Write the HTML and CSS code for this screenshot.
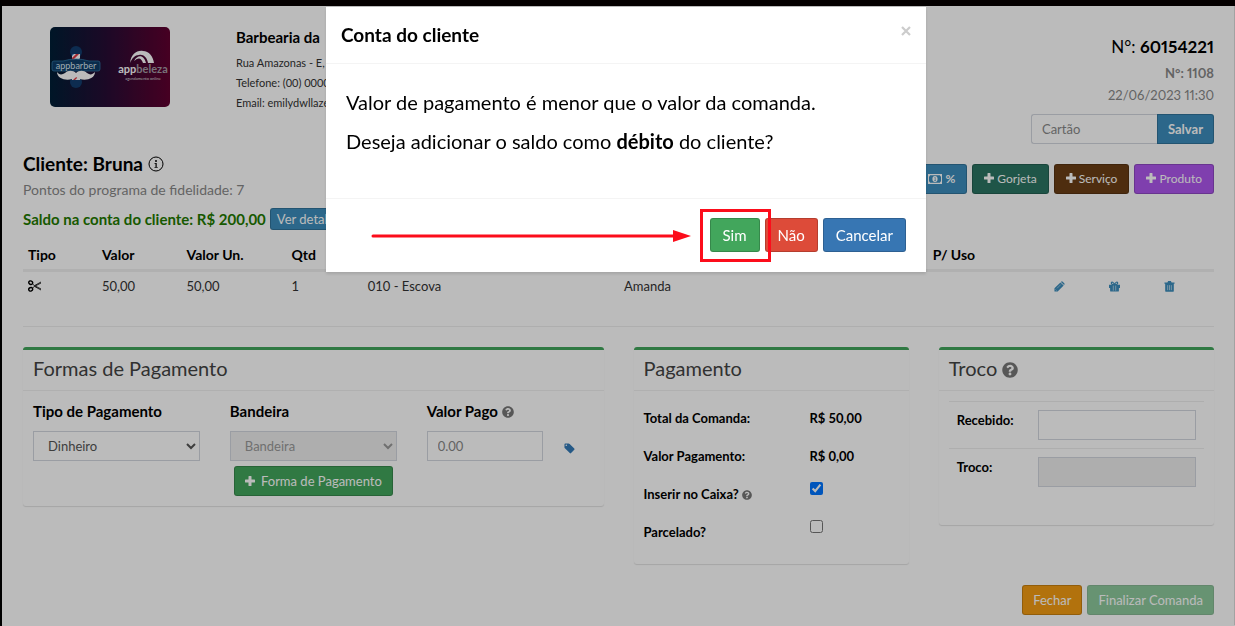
FILE: index.html
```html
<!DOCTYPE html>
<html lang="pt-BR">
<head>
<meta charset="utf-8">
<title>Comanda 60154221</title>
<meta name="viewport" content="width=device-width, initial-scale=1">
<link rel="stylesheet" href="styles.css">
</head>
<body>
<svg class="defs" aria-hidden="true">
  <symbol id="help" viewBox="0 0 512 512"><path d="M504 256c0 136.997-111.043 248-248 248S8 392.997 8 256C8 119.083 119.043 8 256 8s248 111.083 248 248zM262.655 90c-54.497 0-89.255 22.957-116.549 63.758-3.536 5.286-2.353 12.415 2.715 16.258l34.699 26.31c5.205 3.947 12.621 3.008 16.665-2.122 17.864-22.658 30.113-35.797 57.303-35.797 20.429 0 45.698 13.148 45.698 32.958 0 14.976-12.363 22.667-32.534 33.976C247.128 238.528 216 254.941 216 296v4c0 6.627 5.373 12 12 12h56c6.627 0 12-5.373 12-12v-1.333c0-28.462 83.186-29.647 83.186-106.667 0-58.002-60.165-102-116.531-102zM256 338c-25.365 0-46 20.635-46 46 0 25.364 20.635 46 46 46s46-20.636 46-46c0-25.365-20.635-46-46-46z"/></symbol>
  <symbol id="plus" viewBox="0 0 10 10"><path d="M4 0h2a.5.5 0 0 1 .5.5v3H9.500a.5.5 0 0 1 .5.5v2a.5.5 0 0 1-.5.5H6.500v3a.5.5 0 0 1-.5.5H4a.5.5 0 0 1-.5-.5v-3H.5A.5.5 0 0 1 0 6V4a.5.5 0 0 1 .5-.5h3v-3A.5.5 0 0 1 4 0z"/></symbol>
</svg>

<main class="page">
  <header class="top">
    <svg class="logo" viewBox="0 0 120 80" role="img" aria-label="appbarber e appbeleza">
      <defs><linearGradient id="logo-bg"><stop offset="0" stop-color="#001e36"/><stop offset=".45" stop-color="#250d35"/><stop offset="1" stop-color="#60002f"/></linearGradient></defs>
      <rect width="120" height="80" rx="5" fill="url(#logo-bg)"/>
      <circle cx="26" cy="25" r="6" fill="#123d6d"/><circle cx="26" cy="55" r="6" fill="#123d6d"/>
      <path d="M22 27h8v7h-8zM22 48h8v5h-8z" fill="#fff"/>
      <path d="M22 31l4-4h3l-7 7zM23 53l5-5h2l-5 5z" fill="#e23a46"/><path d="M27 34l3-3v3zM22 27h2l-2 2z" fill="#2d70b9"/>
      <path d="M4 34h9q13-4 26 0h9q2 0 2 2v6q0 2-2 2H4q-2 0-2-2v-6q0-2 2-2z" fill="#0e3c68" stroke="#3580ae" stroke-width=".7"/>
      <path d="M26 46c-3-3-8-3-11 0-3 2-6 2-8-1 0 8 13 10 19 5 6 5 19 3 19-5-3 3-5 3-8 1-3-3-8-3-11 0z" fill="#fff"/>
      <text x="26" y="42" class="logo-barber">appbarber</text>
      <path d="M80 36c1-9 7-13 13-12 6 0 10 5 11 12h-6c-1-6-5-9-9-8-4 0-7 3-9 8z" fill="#fff"/><path d="M84 34c4-7 10-6 12 2h-3c-2-5-4-6-9-2z" fill="#fff"/>
      <text x="93" y="46" class="logo-beleza">app<tspan fill="#a39aa4">beleza</tspan></text>
      <text x="93" y="53" class="logo-tag">agendamento online</text>
    </svg>
    <address class="shop">
      <strong>Barbearia da</strong>
      <span>Rua Amazonas - E,</span>
      <span>Telefone: (00) 0000</span>
      <span>Email: emilydwllaze</span>
    </address>
    <div class="order">
      <p class="order-number">N°: <b>60154221</b></p>
      <p class="order-sub"><b>N°: 1108</b></p>
      <p class="order-sub">22/06/2023 11:30</p>
      <form class="card-form">
        <input class="field" type="text" placeholder="Cartão" aria-label="Cartão">
        <button class="btn blue" type="button"><b>Salvar</b></button>
      </form>
    </div>
  </header>

  <section class="client">
    <div>
      <h1>Cliente: Bruna
        <svg class="info" viewBox="0 0 16 16"><circle cx="8" cy="8" r="7" fill="none" stroke="#000"/><circle cx="8" cy="5" r="1"/><path d="M6.500 7h2.200v4h1v.8H6.500V11h1V7.800h-1z"/></svg>
      </h1>
      <p class="points">Pontos do programa de fidelidade: 7</p>
      <p class="balance"><b>Saldo na conta do cliente: R$ 200,00</b> <button class="btn blue small" type="button">Ver detalhes</button></p>
    </div>
    <div class="actions tools">
      <button class="btn blue" type="button"><svg class="money" viewBox="0 0 14 10"><path fill-rule="evenodd" d="M0 0h14v10H0zM2 1.300Q2 2.500 1 2.500v5q1 0 1 1.200h10q0-1.200 1-1.200v-5q-1 0-1-1.200zM7 2a2.600 3 0 0 1 0 6 2.600 3 0 0 1 0-6zM6.500 3.300v.8h.3v2h-.5v.7h1.600v-.7h-.4V3.300z"/></svg> <b>%</b></button>
      <button class="btn teal" type="button"><svg class="plus"><use href="#plus"/></svg> Gorjeta</button>
      <button class="btn brown" type="button"><svg class="plus"><use href="#plus"/></svg> Serviço</button>
      <button class="btn purple" type="button"><svg class="plus"><use href="#plus"/></svg> Produto</button>
    </div>
  </section>

  <table class="items">
    <colgroup><col class="c-type"><col class="c-value"><col class="c-unit"><col class="c-qty"><col class="c-desc"><col class="c-staff"><col class="c-use"><col class="c-act"><col class="c-act"><col class="c-act"></colgroup>
    <thead><tr><th>Tipo</th><th>Valor</th><th>Valor Un.</th><th>Qtd</th><th></th><th></th><th>P/ Uso</th><th></th><th></th><th></th></tr></thead>
    <tbody><tr>
      <td><svg class="scissors" viewBox="0 0 14 12"><g fill="none" stroke="#000"><ellipse cx="2.700" cy="2.700" rx="2" ry="1.700" stroke-width="1.400" transform="rotate(25 2.700 2.700)"/><ellipse cx="2.700" cy="9.300" rx="2" ry="1.700" stroke-width="1.400" transform="rotate(-25 2.700 9.300)"/><path d="M4.500 4l2 1.600L13 2M4.500 8l2-1.600L13 10M6.500 5.600L13 9M6.500 6.400L13 3" stroke-width=".8"/></g></svg></td>
      <td>50,00</td><td>50,00</td><td>1</td><td>010 - Escova</td><td>Amanda</td><td></td>
      <td><button class="icon" type="button" aria-label="Editar"><svg viewBox="0 0 12 12"><path d="M.5 8L7 1.500l3.500 3.500L4 11.500H.5zM7.800.8q.9-.8 1.700 0l1.700 1.700q.8.800 0 1.700L11 4.400 7.600 1z"/><path d="M1.500 9.200l1.300 1.300M3.300 8L7.500 3.800" stroke="#fff" stroke-width=".5"/></svg></button></td>
      <td><button class="icon" type="button" aria-label="Presente"><svg viewBox="0 0 12 12"><path d="M0 4h12v3.500H0zM1.200 7h9.600v3.500q0 1-1 1H2.200q-1 0-1-1z"/><path d="M6 4.200C5 .8 2.500.5 2.500 2.300S5 4.200 6 4.200s3.500 0 3.500-1.900S7 .8 6 4.200z" fill="none" stroke="#3c8dbc" stroke-width="1.200"/><path d="M4.700 5v5.500M7.300 5v5.500" stroke="#fff" stroke-width=".6"/></svg></button></td>
      <td><button class="icon" type="button" aria-label="Excluir"><svg viewBox="0 0 12 12"><path d="M.5 1.500h3.200L4.500 0h3l.8 1.500h3.200v1.600H.5zM1.300 3.100h9.400v7.400q0 1.300-1.200 1.300h-7q-1.200 0-1.200-1.300z"/><path d="M4 4.500v5.500M6 4.500v5.500M8 4.500v5.500" stroke="#fff" stroke-width=".6"/></svg></button></td>
    </tr></tbody>
  </table>

  <div class="panels">
    <section class="panel wide">
      <h2>Formas de Pagamento</h2>
      <div class="panel-body methods">
        <div>
          <label for="tipo">Tipo de Pagamento</label>
          <select class="field" id="tipo"><option>Dinheiro</option></select>
        </div>
        <div>
          <label for="bandeira">Bandeira</label>
          <select class="field" id="bandeira" disabled><option>Bandeira</option></select>
          <button class="btn green add" type="button"><svg class="plus"><use href="#plus"/></svg> Forma de Pagamento</button>
        </div>
        <div>
          <label for="pago">Valor Pago <svg class="help"><use href="#help"/></svg></label>
          <div class="paid">
            <input class="field" id="pago" type="text" placeholder="0.00">
            <button class="icon" type="button" aria-label="Desconto"><svg viewBox="0 0 12 12"><path fill="#337ab7" fill-rule="evenodd" d="M.5 1.500q0-1 1-1H5q.7 0 1.200.5l5 5q.7.700 0 1.400L7.700 11q-.7.700-1.400 0L1 5.800Q.5 5.300.5 4.500zM2.500 1.600a.9.900 0 1 0 0 1.800.9.900 0 0 0 0-1.800z"/></svg></button>
          </div>
        </div>
      </div>
    </section>

    <section class="panel">
      <h2>Pagamento</h2>
      <div class="panel-body summary">
        <b>Total da Comanda:</b><b>R$ 50,00</b>
        <b>Valor Pagamento:</b><b>R$ 0,00</b>
        <label for="caixa">Inserir no Caixa? <svg class="help tiny"><use href="#help"/></svg></label><input type="checkbox" id="caixa" checked>
        <label for="parcelado">Parcelado?</label><input type="checkbox" id="parcelado">
      </div>
    </section>

    <section class="panel">
      <h2>Troco <svg class="help big"><use href="#help"/></svg></h2>
      <div class="panel-body change">
        <div class="change-row"><label for="recebido">Recebido:</label><input class="field" id="recebido" type="text"></div>
        <div class="change-row"><label for="troco">Troco:</label><input class="field" id="troco" type="text" disabled></div>
      </div>
    </section>
  </div>

  <footer class="actions bottom">
    <button class="btn orange" type="button">Fechar</button>
    <button class="btn green" type="button" disabled>Finalizar Comanda</button>
  </footer>
</main>

<div class="backdrop">
  <div class="modal" role="dialog" aria-labelledby="modal-title">
    <header class="modal-header">
      <h2 id="modal-title">Conta do cliente</h2>
      <button class="close" type="button" aria-label="Fechar"><svg viewBox="0 0 10 10"><path d="M1 1l8 8M9 1L1 9" stroke="#ccc" stroke-width="2.200"/></svg></button>
    </header>
    <div class="modal-body">
      <p>Valor de pagamento é menor que o valor da comanda.</p>
      <p>Deseja adicionar o saldo como <b>débito</b> do cliente?</p>
    </div>
    <footer class="modal-footer">
      <svg class="arrow" viewBox="0 0 320 14"><path d="M2 7h306" stroke="#fc0d1b" stroke-width="3" stroke-linecap="round"/><path d="M302 1l18 6-18 6z" fill="#fc0d1b"/></svg>
      <span class="marked"><button class="btn large success" type="button">Sim</button></span>
      <button class="btn large danger" type="button">Não</button>
      <button class="btn large primary" type="button">Cancelar</button>
    </footer>
  </div>
</div>
</body>
</html>
```

FILE: styles.css
```css
* { box-sizing: border-box; }

body {
  margin: 0;
  min-height: 100vh;
  background: #fff;
  border-top: 6px solid #060000;
  border-left: 2px solid #000;
  color: #000;
  font: 13px/20px Lato, "Open Sans", sans-serif;
}

h1, h2, p { margin: 0; font-weight: 400; }
b, strong, th { font-weight: 700; }
button, input, select { font-family: inherit; }
svg { fill: currentColor; }
.defs { display: none; }

.page { padding: 0 20px 10px 21px; border-right: 1px solid #ddd; }

/* Header */
.top { display: flex; align-items: flex-start; padding-top: 21px; }
.logo { width: 120px; height: 80px; margin: 0 66px 0 27px; }
.logo text { font-family: Lato, sans-serif; text-anchor: middle; }
.logo-barber { font-size: 9px; fill: #d8e4ee; }
.logo-beleza { font-size: 11px; font-weight: 700; fill: #fff; }
.logo-tag { font-size: 4px; fill: #ddd; }
.shop { display: flex; flex-direction: column; font-style: normal; font-size: 11px; color: #333; white-space: nowrap; }
.shop strong { font-size: 15px; line-height: 20px; margin-bottom: 6px; color: #000; }
.order { margin-left: auto; padding-top: 5px; text-align: right; font-variant-numeric: proportional-nums; }
.order-number { font-size: 17px; line-height: 30px; }
.order-sub { font-size: 13px; line-height: 22px; color: #888; }
.card-form { display: flex; justify-content: flex-end; margin-top: 8px; }
.card-form .field { width: 126px; border-right: 0; border-radius: 3px 0 0 3px; }
.card-form .btn { border-radius: 0 3px 3px 0; }

/* Controls */
.btn {
  height: 30px;
  padding: 0 10px;
  border: 1px solid rgba(0, 0, 0, .18);
  border-radius: 3px;
  color: #fff;
  font-size: 13px;
  line-height: 18px;
  white-space: nowrap;
}
.btn:disabled { opacity: .6; }
.small { height: 22px; padding: 0 6px; }
.blue { background: #3c8dbc; }
.teal { background: #2b7563; }
.brown { background: #6b3e15; }
.purple { background: #ae57ee; }
.green, .success { background: #42a65c; }
.orange { background: #f39c12; }
.danger { background: #dd4b39; }
.primary { background: #3776b3; }
.large { height: 34px; padding: 0 12px; font-size: 15px; }
.plus { width: 10px; height: 10px; }
.money { width: 14px; height: 10px; vertical-align: -1px; }

.field {
  display: block;
  width: 100%;
  height: 30px;
  padding: 0 10px;
  border: 1px solid #d2d6de;
  border-radius: 0;
  background: #fff;
  color: #555;
  font-size: 13px;
}
.field::placeholder { color: #888; opacity: 1; }
.field:disabled { background: #eee; color: #999; opacity: 1; }
.icon { width: 11px; height: 20px; padding: 0; border: 0; background: none; color: #3c8dbc; }
.icon svg { display: block; width: 11px; height: 11px; }
.help { width: 12px; height: 12px; vertical-align: -1px; color: #777; }
.tiny { width: 10px; height: 10px; }
.big { width: 16px; height: 16px; vertical-align: -2px; }

/* Client */
.client { display: flex; justify-content: space-between; align-items: flex-start; margin-top: 8px; padding-top: 12px; }
.client h1 { font-size: 19px; line-height: 24px; font-weight: 700; margin-top: -12px; }
.info { width: 16px; height: 16px; vertical-align: -1px; }
.points { padding: 4px 0; font-size: 14px; line-height: 20px; color: #888; }
.balance { display: flex; align-items: center; gap: 4px; height: 30px; font-size: 15px; color: #1f7a00; }
.actions { display: flex; justify-content: flex-end; gap: 5px; }
.tools .btn { padding: 0 11px; font-size: 12px; }

/* Items */
.items { width: 100%; table-layout: fixed; border-collapse: collapse; border-bottom: 1px solid #eee; }
.items th, .items td { padding: 0 5px; text-align: left; font-size: 13px; }
.items th { height: 36px; padding-top: 7px; border-bottom: 3px solid #f0f0f0; font-size: 14px; }
.items td { height: 56px; padding-top: 4px; vertical-align: top; color: #333; }
.items .icon svg { margin-top: 1px; }
.scissors { display: block; width: 14px; height: 12px; margin-top: 4px; }
.c-type { width: 6.2%; }
.c-value { width: 7.1%; }
.c-unit { width: 8.8%; }
.c-qty { width: 6.4%; }
.c-desc { width: 21.5%; }
.c-staff { width: 25.9%; }
.c-use { width: 10.2%; }
.c-act { width: 4.6%; }

/* Panels */
.panels { display: grid; grid-template-columns: repeat(12, 1fr); gap: 30px; align-items: start; margin-top: 20px; }
.panel { grid-column: span 3; min-width: 0; border-top: 3px solid #42a65c; border-radius: 3px; box-shadow: 0 1px 1px rgba(0, 0, 0, .12); }
.wide { grid-column: span 6; }
.panel h2 { padding: 6px 10px 10px; border-bottom: 1px solid #f0f0f0; color: #444; font-size: 20px; line-height: 24px; }
.panel-body { padding: 10px; }
.methods { display: grid; grid-template-columns: repeat(3, 1fr); gap: 30px; }
.methods label { display: block; margin-bottom: 10px; font-size: 15px; font-weight: 700; }
.add { display: block; margin: 5px auto 0; }
.add .plus { margin-right: 3px; }
.paid { display: flex; align-items: center; gap: 21px; }
.paid .field { width: 70%; }
.paid .icon svg { margin-top: 5px; }
.summary { display: grid; grid-template-columns: 65% 1fr; grid-auto-rows: 38px; padding: 8px 10px 13px; align-items: center; }
.summary label { font-weight: 700; }
.summary input { width: 13px; height: 13px; margin: 0 1px 10px; }
.change { padding-bottom: 30px; }
.change-row { display: flex; align-items: flex-start; padding: 8px; border-top: 1px solid #eee; }
.change-row label { width: 34%; font-weight: 700; }
.change-row .field { width: 66%; }
select.field { padding: 0 0 0 10px; }
.bottom { margin-top: 21px; }

/* Dialog */
.backdrop { position: fixed; inset: 0; padding: 7px 0 0 17px; background: rgba(0, 0, 0, .267); }
.modal { width: 600px; max-width: 100%; margin: 0 auto; background: #fff; box-shadow: 0 2px 3px rgba(0, 0, 0, .13); }
.modal-header { display: flex; justify-content: space-between; align-items: flex-start; padding: 15px; border-bottom: 1px solid #f4f4f4; }
.modal-header h2 { font-size: 19px; line-height: 26px; font-weight: 700; }
.close { width: 10px; height: 18px; padding: 0; border: 0; background: none; }
.close svg { display: block; width: 10px; height: 10px; }
.modal-body { padding: 24px 20px 32px; font-size: 20px; }
.modal-body p { padding-bottom: 11px; line-height: 28px; }
.modal-footer { position: relative; display: flex; justify-content: flex-end; gap: 5px; padding: 19px 20px 20px; border-top: 1px solid #f4f4f4; }
.arrow { position: absolute; left: 45px; top: 30px; width: 320px; height: 14px; }
.marked { position: relative; }
.marked::after { content: ""; position: absolute; inset: -9px -11px -10px -10px; border: 3px solid #fc0d1b; z-index: 1; }
```
